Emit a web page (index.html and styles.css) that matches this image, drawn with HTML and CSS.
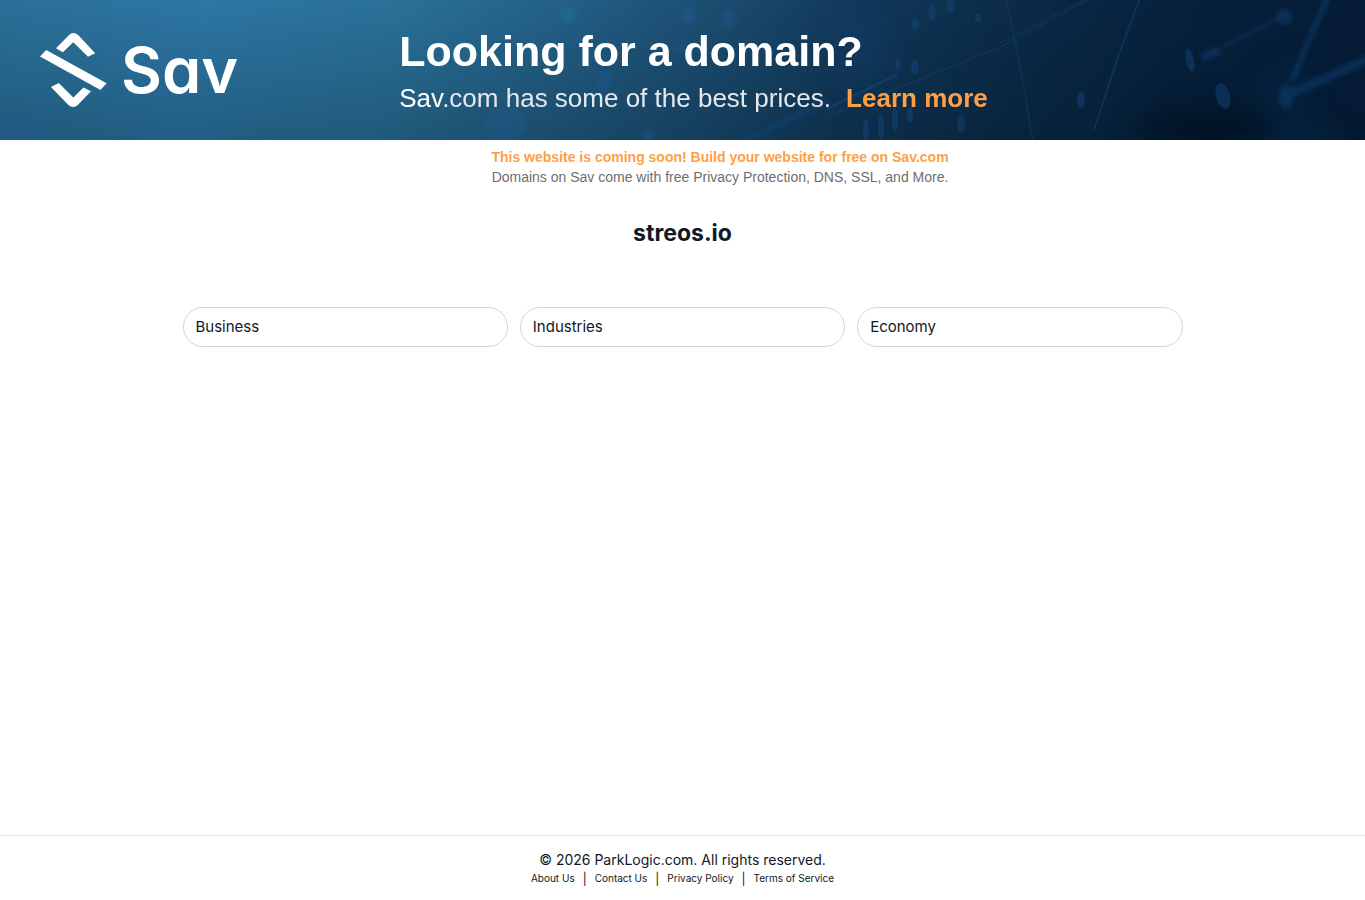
FILE: index.html
```html
<!DOCTYPE html>
<html lang="en">
<head>
    <meta charset="UTF-8">
    <meta name="viewport" content="width=device-width, initial-scale=1.0">
    <title>streos.io</title>
    <link rel="stylesheet" href="styles.css">
</head>
<body>
    <header class="banner">
        <svg class="banner-art" viewBox="0 0 1365 140" preserveAspectRatio="none" aria-hidden="true">
            <defs>
                <filter id="soft" x="-50%" y="-50%" width="200%" height="200%" color-interpolation-filters="sRGB">
                    <feGaussianBlur stdDeviation="2"/>
                </filter>
                <filter id="softer" x="-50%" y="-50%" width="200%" height="200%" color-interpolation-filters="sRGB">
                    <feGaussianBlur stdDeviation="12"/>
                </filter>
            </defs>
            <g filter="url(#softer)">
                <ellipse cx="860" cy="45" rx="24" ry="40" fill="#123f70" opacity=".35"/>
                <ellipse cx="1205" cy="130" rx="70" ry="24" fill="#00101f" opacity=".6"/>
                <ellipse cx="1285" cy="90" rx="25" ry="25" fill="#06294a" opacity=".4"/>
                <ellipse cx="1300" cy="140" rx="36" ry="15" fill="#062a50" opacity=".5"/>
                <ellipse cx="10" cy="135" rx="40" ry="20" fill="#235a87" opacity=".6"/>
            </g>
            <g filter="url(#soft)" fill="#1b5a92">
                <circle cx="568" cy="14" r="9" fill="#216d98" opacity=".5"/>
                <ellipse cx="505" cy="124" rx="20" ry="18" fill="#235b8b" opacity=".4"/>
                <ellipse cx="603" cy="80" rx="8" ry="10" opacity=".4"/>
                <circle cx="648" cy="135" r="6" opacity=".4"/>
                <ellipse cx="689" cy="15" rx="8" ry="10" opacity=".5"/>
                <ellipse cx="682" cy="47" rx="9" ry="8" opacity=".3"/>
                <ellipse cx="729" cy="19" rx="8" ry="10" opacity=".4"/>
            </g>
            <g fill="#164a82" opacity=".45">
                <ellipse cx="915" cy="24" rx="4" ry="6"/>
                <ellipse cx="932" cy="13" rx="4" ry="7"/>
                <ellipse cx="950" cy="6" rx="4" ry="7"/>
                <ellipse cx="978" cy="18" rx="3" ry="4"/>
                <ellipse cx="898" cy="64" rx="3" ry="6"/>
                <ellipse cx="915" cy="67" rx="4" ry="7"/>
                <ellipse cx="895" cy="120" rx="3" ry="12"/>
                <ellipse cx="881" cy="127" rx="3" ry="13"/>
                <ellipse cx="910" cy="115" rx="3" ry="8"/>
                <ellipse cx="866" cy="130" rx="3" ry="12"/>
                <ellipse cx="961" cy="124" rx="4" ry="8"/>
                <ellipse cx="1081" cy="100" rx="4" ry="8"/>
                <ellipse cx="1190" cy="60" rx="4" ry="12" transform="rotate(-12 1190 60)"/>
                <ellipse cx="1223" cy="96" rx="7" ry="13" transform="rotate(-16 1223 96)"/>
            </g>
            <g fill="none" stroke="#17508a" opacity=".45">
                <path d="M825 110 L898 74" stroke-width="2"/>
                <path d="M826 117 L1000 47 L1092 -2" stroke-width="1"/>
                <path d="M1000 43 L1088 -2" stroke-width="1"/>
                <path d="M845 18 L690 78" stroke-width="1" opacity=".5"/>
                <path d="M830 48 L925 -2" stroke-width="1" opacity=".6"/>
                <path d="M1006 -2 L1020 65 L1033 142" stroke-width="2" opacity=".6"/>
                <path d="M1140 -2 L1119 54 L1094 130" stroke-width="2" opacity=".8"/>
            </g>
            <g filter="url(#soft)" stroke="#124b84" fill="#124b84" opacity=".4">
                <path d="M745 140 L827 102" stroke-width="6"/>
                <path d="M1328 -4 L1292 80" stroke-width="6"/>
                <path d="M1370 58 L1290 94" stroke-width="9"/>
                <path d="M1202 58 L1220 50" stroke-width="9"/>
                <path d="M1222 48 L1277 19" stroke-width="3"/>
                <circle cx="1284" cy="17" r="8"/>
                <ellipse cx="1286" cy="97" rx="7" ry="12"/>
                <path d="M1330 84 L1366 112" stroke-width="2" opacity=".5"/>
            </g>
        </svg>
        <a class="logo" href="#">
            <svg viewBox="40 33 67 74" width="67" height="74" fill="#fff" aria-hidden="true">
                <path d="M40 56.5 L46.2 50 L106.6 83.3 L100.5 90 Z"/>
                <path d="M56 48.2 L68.6 35.4 Q71 33 73.5 33 Q76 33 78.4 35.2 L95.2 53.2 L88 56.8 L73.3 42.3 L62.8 52.3 Z"/>
                <path d="M51 87 L58.8 83 L73.3 97.4 L83.5 87.4 L91 91.3 L78 104.8 Q75.8 107 73.3 107 Q70.6 107 68.2 104.8 Z"/>
            </svg>
            <span class="logo-text">Sav</span>
        </a>
        <div class="banner-text">
            <h2>Looking for a domain?</h2>
            <p><strong>Sav</strong>.com has some of the best prices. <a href="#">Learn more</a></p>
        </div>
    </header>

    <div class="notice">
        <a href="#">This website is coming soon! Build your website for free on Sav.com</a>
        <p>Domains on Sav come with free Privacy Protection, DNS, SSL, and More.</p>
    </div>

    <main>
        <h1>streos.io</h1>
        <nav class="topics">
            <a href="#">Business</a>
            <a href="#">Industries</a>
            <a href="#">Economy</a>
        </nav>
    </main>

    <footer>
        <p>© 2026 ParkLogic.com. All rights reserved.</p>
        <div class="footer-links">
            <a href="#">About Us</a>
            <span>|</span>
            <a href="#">Contact Us</a>
            <span>|</span>
            <a href="#">Privacy Policy</a>
            <span>|</span>
            <a href="#">Terms of Service</a>
        </div>
    </footer>
</body>
</html>
```
FILE: styles.css
```css
* {
    box-sizing: border-box;
}

body {
    display: flex;
    flex-direction: column;
    min-height: 100vh;
    margin: 0;
    font-family: Inter, sans-serif;
    color: #111827;
    background: #fff;
}

h1, h2, p {
    margin: 0;
}

a {
    color: inherit;
    text-decoration: none;
}

.banner {
    position: relative;
    display: flex;
    align-items: center;
    gap: 161px;
    height: 140px;
    padding: 0 40px;
    overflow: hidden;
    font-family: "Liberation Sans", Arial, sans-serif;
    background: linear-gradient(to bottom, rgba(0, 20, 30, 0), rgba(0, 20, 30, 0.25)),
        linear-gradient(100deg, #2a7099 0%, #2d76a5 15%, #2a7198 29%, #225d85 42%, #1b4c70 52%, #11385a 62%, #0a2a47 74%, #061f3b 87%, #051c38 100%);
}

.banner-art {
    position: absolute;
    top: 0;
    left: 0;
    width: 100%;
    height: 100%;
}

.logo, .banner-text {
    position: relative;
}

.logo {
    display: flex;
    align-items: center;
    gap: 14px;
    color: #fff;
}

.logo-text {
    font-family: Inter, sans-serif;
    font-size: 63px;
    font-weight: 600;
    line-height: 74px;
    font-feature-settings: "cv11";
}

.banner-text {
    padding-top: 4px;
}

.banner-text h2 {
    font-size: 43px;
    line-height: 52px;
    color: #fff;
}

.banner-text p {
    font-size: 26px;
    line-height: 42px;
    color: #e5e9ee;
}

.banner-text strong {
    font-weight: normal;
    color: #fff;
}

.banner-text a {
    margin-left: 8px;
    font-weight: bold;
    color: #ff9f43;
}

.notice {
    padding: 7px 0 0 75px;
    font-family: "Liberation Sans", Arial, sans-serif;
    font-size: 14px;
    line-height: 20px;
    text-align: center;
    color: #6e6e6e;
}

.notice a {
    font-weight: bold;
    color: #ff9f43;
}

main {
    flex: 1;
    width: 100%;
    max-width: 1000px;
    margin: 0 auto;
}

h1 {
    padding: 30px 0 58px;
    font-size: 23px;
    line-height: 32px;
    text-align: center;
}

.topics {
    display: grid;
    grid-template-columns: repeat(3, 1fr);
    gap: 12px;
}

.topics a {
    padding: 7px 12px;
    border: 1px solid #d1d5db;
    border-radius: 20px;
    font-size: 15px;
    line-height: 24px;
}

footer {
    padding: 14px 0 13px;
    border-top: 1px solid #e5e7eb;
    font-size: 14px;
    line-height: 20px;
    text-align: center;
}

.footer-links {
    display: flex;
    justify-content: center;
    gap: 8px;
    font-size: 12px;
    line-height: 17px;
}

.footer-links a {
    font-size: 10px;
}
```
